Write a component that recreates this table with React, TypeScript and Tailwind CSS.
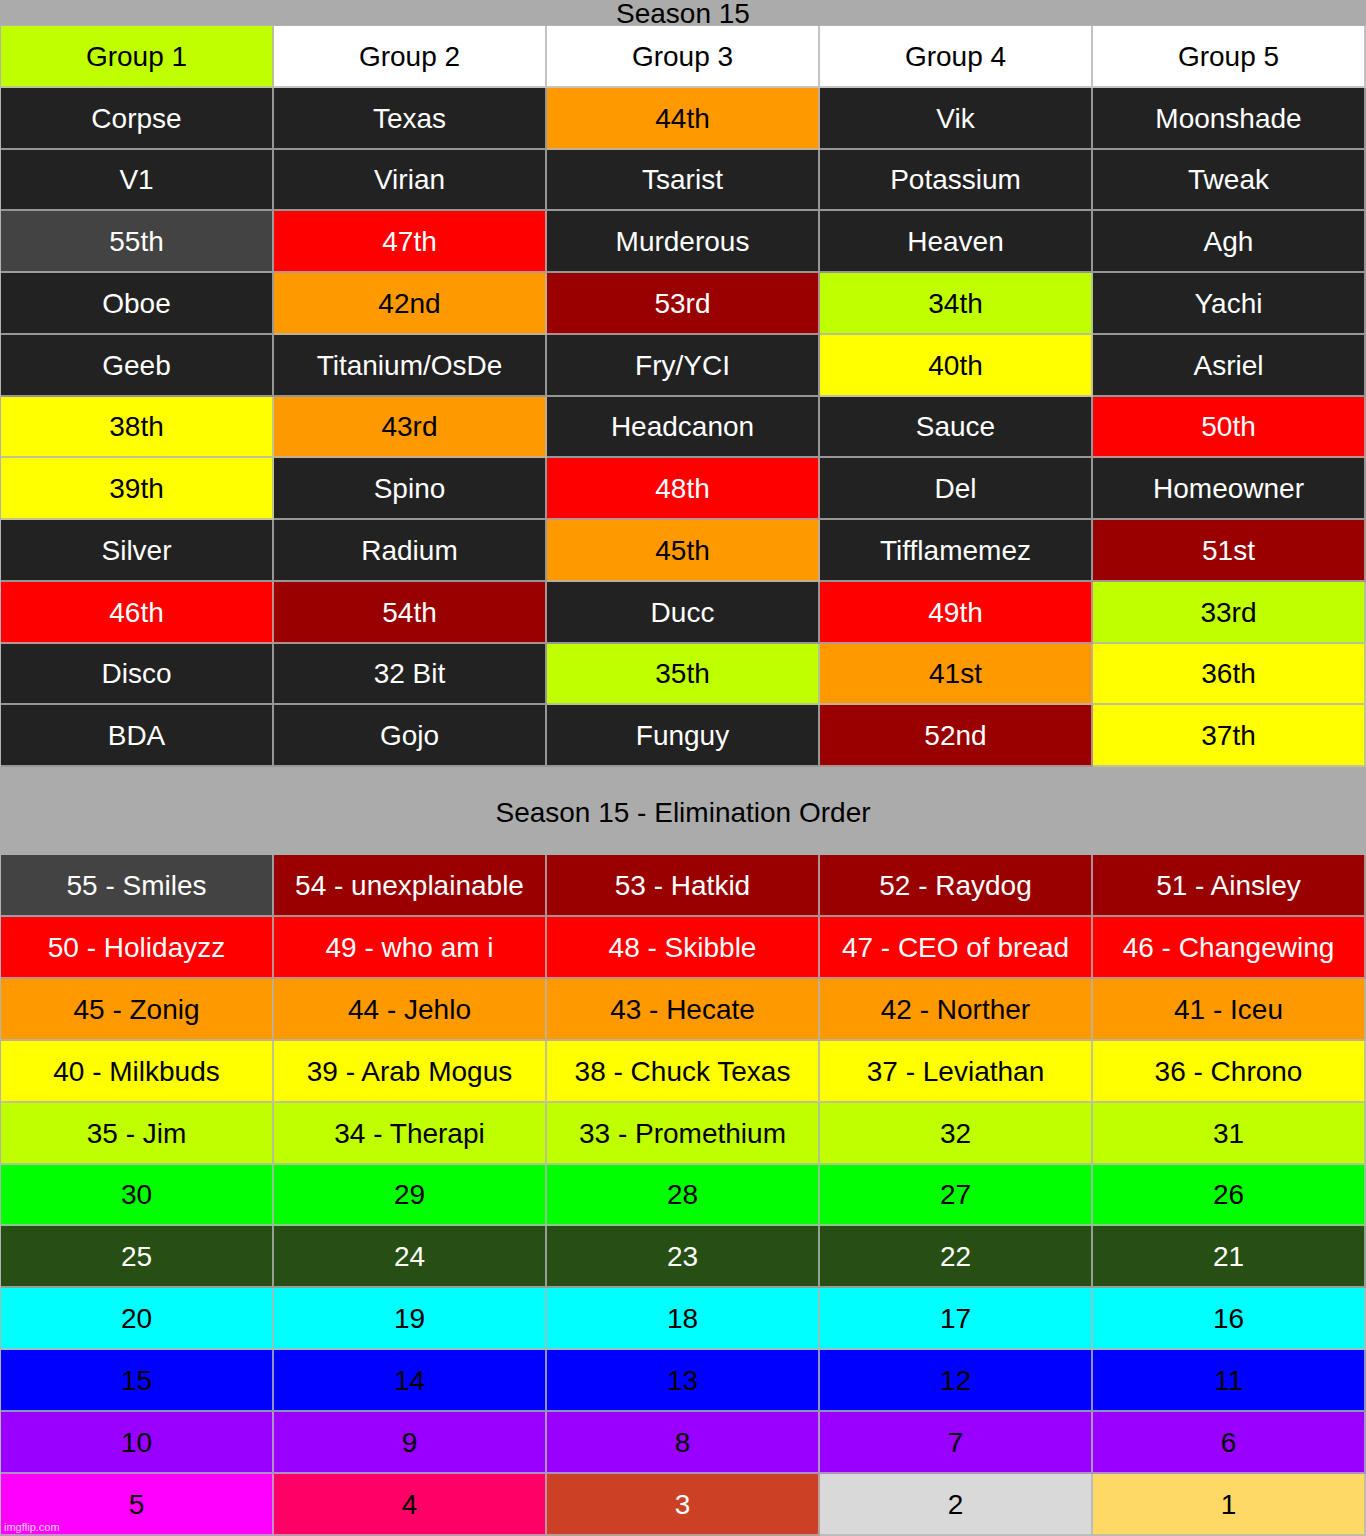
import React from "react";

// colour name -> full class string (bg + text)
const tone: Record<string, string> = {
  lime: "bg-[#bfff00] text-black",
  white: "bg-white text-black",
  dark: "bg-[#222222] text-white",
  gray: "bg-[#434343] text-white",
  red: "bg-[#ff0000] text-white",
  orange: "bg-[#ff9900] text-black",
  maroon: "bg-[#990000] text-white",
  yellow: "bg-[#ffff00] text-black",
  green: "bg-[#00ff00] text-black",
  forest: "bg-[#274e13] text-white",
  cyan: "bg-[#00ffff] text-black",
  blue: "bg-[#0000ff] text-black",
  purple: "bg-[#9900ff] text-black",
  magenta: "bg-[#ff00ff] text-black",
  pink: "bg-[#ff0066] text-black",
  rust: "bg-[#cc4125] text-white",
  silver: "bg-[#d9d9d9] text-black",
  gold: "bg-[#ffd966] text-black",
};

type Cell = [string, string];

const groups: Cell[][] = [
  [["Group 1", "lime"], ["Group 2", "white"], ["Group 3", "white"], ["Group 4", "white"], ["Group 5", "white"]],
  [["Corpse", "dark"], ["Texas", "dark"], ["44th", "orange"], ["Vik", "dark"], ["Moonshade", "dark"]],
  [["V1", "dark"], ["Virian", "dark"], ["Tsarist", "dark"], ["Potassium", "dark"], ["Tweak", "dark"]],
  [["55th", "gray"], ["47th", "red"], ["Murderous", "dark"], ["Heaven", "dark"], ["Agh", "dark"]],
  [["Oboe", "dark"], ["42nd", "orange"], ["53rd", "maroon"], ["34th", "lime"], ["Yachi", "dark"]],
  [["Geeb", "dark"], ["Titanium/OsDe", "dark"], ["Fry/YCI", "dark"], ["40th", "yellow"], ["Asriel", "dark"]],
  [["38th", "yellow"], ["43rd", "orange"], ["Headcanon", "dark"], ["Sauce", "dark"], ["50th", "red"]],
  [["39th", "yellow"], ["Spino", "dark"], ["48th", "red"], ["Del", "dark"], ["Homeowner", "dark"]],
  [["Silver", "dark"], ["Radium", "dark"], ["45th", "orange"], ["Tifflamemez", "dark"], ["51st", "maroon"]],
  [["46th", "red"], ["54th", "maroon"], ["Ducc", "dark"], ["49th", "red"], ["33rd", "lime"]],
  [["Disco", "dark"], ["32 Bit", "dark"], ["35th", "lime"], ["41st", "orange"], ["36th", "yellow"]],
  [["BDA", "dark"], ["Gojo", "dark"], ["Funguy", "dark"], ["52nd", "maroon"], ["37th", "yellow"]],
];

const elimination: Cell[][] = [
  [["55 - Smiles", "gray"], ["54 - unexplainable", "maroon"], ["53 - Hatkid", "maroon"], ["52 - Raydog", "maroon"], ["51 - Ainsley", "maroon"]],
  [["50 - Holidayzz", "red"], ["49 - who am i", "red"], ["48 - Skibble", "red"], ["47 - CEO of bread", "red"], ["46 - Changewing", "red"]],
  [["45 - Zonig", "orange"], ["44 - Jehlo", "orange"], ["43 - Hecate", "orange"], ["42 - Norther", "orange"], ["41 - Iceu", "orange"]],
  [["40 - Milkbuds", "yellow"], ["39 - Arab Mogus", "yellow"], ["38 - Chuck Texas", "yellow"], ["37 - Leviathan", "yellow"], ["36 - Chrono", "yellow"]],
  [["35 - Jim", "lime"], ["34 - Therapi", "lime"], ["33 - Promethium", "lime"], ["32", "lime"], ["31", "lime"]],
  [["30", "green"], ["29", "green"], ["28", "green"], ["27", "green"], ["26", "green"]],
  [["25", "forest"], ["24", "forest"], ["23", "forest"], ["22", "forest"], ["21", "forest"]],
  [["20", "cyan"], ["19", "cyan"], ["18", "cyan"], ["17", "cyan"], ["16", "cyan"]],
  [["15", "blue"], ["14", "blue"], ["13", "blue"], ["12", "blue"], ["11", "blue"]],
  [["10", "purple"], ["9", "purple"], ["8", "purple"], ["7", "purple"], ["6", "purple"]],
  [["5", "magenta"], ["4", "pink"], ["3", "rust"], ["2", "silver"], ["1", "gold"]],
];

const Table = ({ rows, className }: { rows: Cell[][]; className: string }) => (
  <div className={`grid grid-cols-5 border-l border-[rgba(180,180,180,0.8)] ${className}`}>
    {rows.map((row, r) =>
      row.map(([label, color], c) => (
        <div
          key={`${r}-${c}`}
          className={`flex items-center justify-center pt-[2px] border-r-2 border-b-2 border-[rgba(180,180,180,0.8)] text-[28px] leading-none whitespace-nowrap ${tone[color]}`}
        >
          {label}
        </div>
      ))
    )}
  </div>
);

export default function App() {
  return (
    <div className="w-[1366px] h-[1536px] overflow-hidden bg-[#ababab] font-['Liberation_Sans',Arial,sans-serif]">
      <div className="h-[25px] flex justify-center items-end overflow-hidden">
        <span className="text-[28px] leading-[28px] text-black translate-y-[3px]">Season 15</span>
      </div>
      <Table rows={groups} className="h-[742px] grid-rows-[repeat(12,1fr)] border-t border-t-[rgba(180,180,180,0.8)]" />
      <div className="h-[88px] flex items-center justify-center pt-[3px] text-[28px] text-black">
        Season 15 - Elimination Order
      </div>
      <div className="relative">
        <Table rows={elimination} className="h-[681px] grid-rows-[repeat(11,1fr)]" />
        <span className="absolute left-[4px] bottom-[3px] text-[11px] leading-none text-white/80">imgflip.com</span>
      </div>
    </div>
  );
}
